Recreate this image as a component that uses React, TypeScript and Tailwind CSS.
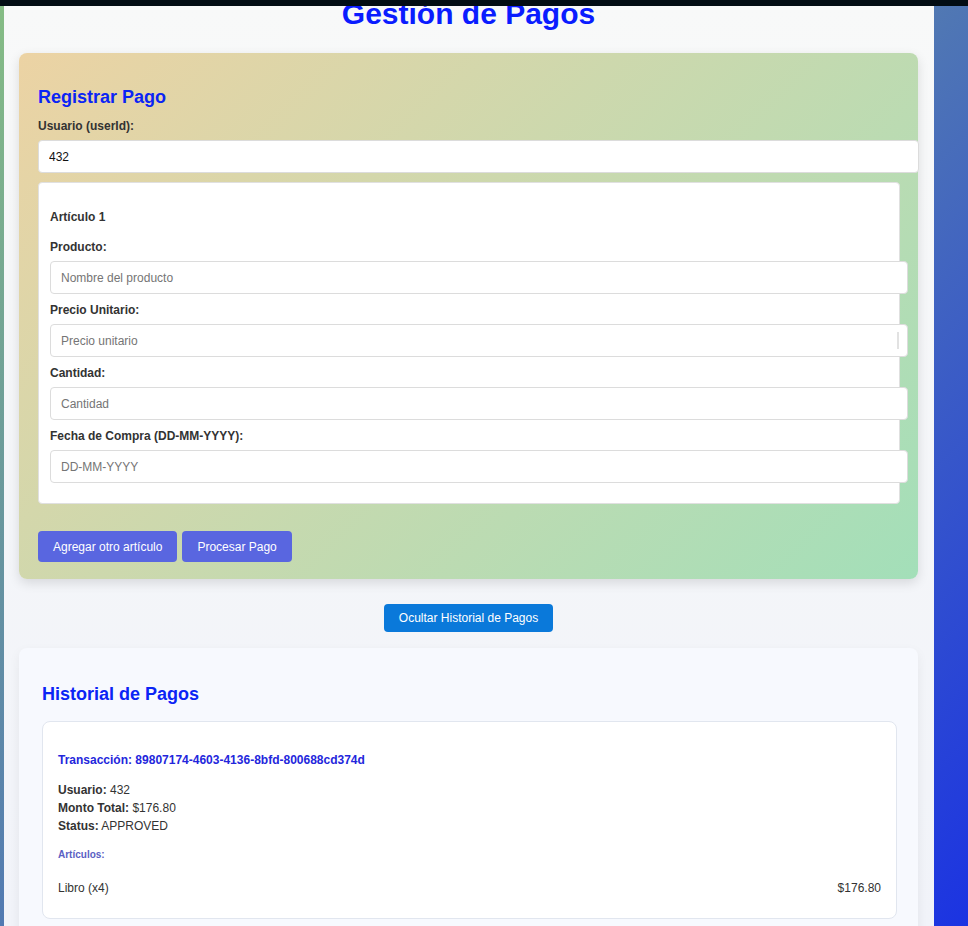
import React from "react";

const font = { fontFamily: '"Liberation Sans", Arial, sans-serif' };

function Field({ label, placeholder, spinner }: { label: string; placeholder: string; spinner?: boolean }) {
  return (
    <div className="flex flex-col">
      <label className="text-[12px] leading-[14px] font-bold text-[#333] mb-[7px]">{label}</label>
      <div className="relative w-[calc(100%+20px)] mb-[9px]">
        <input
          className="w-full h-[33px] px-[10px] text-[12px] bg-white border border-[#dcdcdc] rounded-[4px] outline-none placeholder:text-[#757575] text-[#111]"
          placeholder={placeholder}
          style={font}
        />
        {spinner && <div className="absolute right-[9px] top-[8px] w-[2px] h-[17px] bg-[#e2e2e2]" />}
      </div>
    </div>
  );
}

export default function App() {
  return (
    <div className="h-[926px] overflow-hidden bg-[linear-gradient(135deg,#86bd84,#1b33e2)] flex flex-col" style={font}>
      <div className="h-[6px] bg-[#020d14] shrink-0" />
      <div className="flex flex-1 min-h-0">
        <div className="w-[4px] shrink-0" />
        <div className="w-[930px] shrink-0 bg-[linear-gradient(180deg,#f8f9f9,#f1f3f9)] overflow-hidden pl-[15px] pr-[16px]">
          <h1 className="mt-[-9px] mb-[22px] text-center text-[30px] leading-[34px] font-bold text-[#0a1cff]">
            Gestión de Pagos
          </h1>

          <div className="rounded-[8px] bg-[linear-gradient(135deg,#ecd3a4,#a3dfb9)] shadow-[0_4px_12px_rgba(0,0,0,0.12)] pl-[19px] pr-[18px] pt-[34px] pb-[17px]">
            <h3 className="text-[18px] leading-[21px] font-bold text-[#0b24f5] mb-[11px]">Registrar Pago</h3>
            <label className="block text-[12px] leading-[14px] font-bold text-[#333] mb-[7px]">Usuario (userId):</label>
            <input
              className="block w-[calc(100%+19px)] h-[33px] px-[10px] text-[12px] bg-white border border-[#dcdcdc] rounded-[4px] outline-none text-[#111] mb-[9px]"
              defaultValue="432"
              style={font}
            />

            <div className="bg-white border border-[#e0e0e0] rounded-[4px] px-[11px] pt-[27px] pb-[11px]">
              <h4 className="text-[12px] leading-[14px] font-bold text-[#333] mb-[16px]">Artículo 1</h4>
              <Field label="Producto:" placeholder="Nombre del producto" />
              <Field label="Precio Unitario:" placeholder="Precio unitario" spinner />
              <Field label="Cantidad:" placeholder="Cantidad" />
              <Field label="Fecha de Compra (DD-MM-YYYY):" placeholder="DD-MM-YYYY" />
            </div>

            <div className="flex gap-[5px] mt-[27px]">
              <button className="h-[31px] px-[15px] rounded-[4px] bg-[#5966e0] text-white text-[12px]">Agregar otro artículo</button>
              <button className="h-[31px] px-[15px] rounded-[4px] bg-[#5966e0] text-white text-[12px]">Procesar Pago</button>
            </div>
          </div>

          <div className="flex justify-center mt-[25px]">
            <button className="h-[28px] px-[15px] rounded-[4px] bg-[#0a79da] text-white text-[12px]">Ocultar Historial de Pagos</button>
          </div>

          <div className="mt-[16px] rounded-[8px] bg-[#f7f9fe] shadow-[0_4px_12px_rgba(0,0,0,0.06)] pl-[23px] pr-[21px] pt-[36px] pb-[20px]">
            <h3 className="text-[18px] leading-[21px] font-bold text-[#0b24f5] mb-[16px]">Historial de Pagos</h3>
            <div className="bg-white border border-[#e1e6ef] rounded-[8px] px-[15px] pt-[31px] pb-[23px]">
              <h4 className="text-[12px] leading-[14px] font-bold text-[#2326dc] mb-[14px]">
                Transacción: 89807174-4603-4136-8bfd-800688cd374d
              </h4>
              <div className="text-[12px] leading-[18px] text-[#333]">
                <p><strong>Usuario:</strong> 432</p>
                <p><strong>Monto Total:</strong> $176.80</p>
                <p><strong>Status:</strong> APPROVED</p>
              </div>
              <h5 className="mt-[14px] text-[10px] leading-[12px] font-bold text-[#5a5fc4] mb-[20px]">Artículos:</h5>
              <div className="flex justify-between text-[12px] leading-[14px] text-[#333]">
                <span>Libro (x4)</span>
                <span>$176.80</span>
              </div>
            </div>
          </div>
        </div>
        <div className="flex-1" />
      </div>
    </div>
  );
}
